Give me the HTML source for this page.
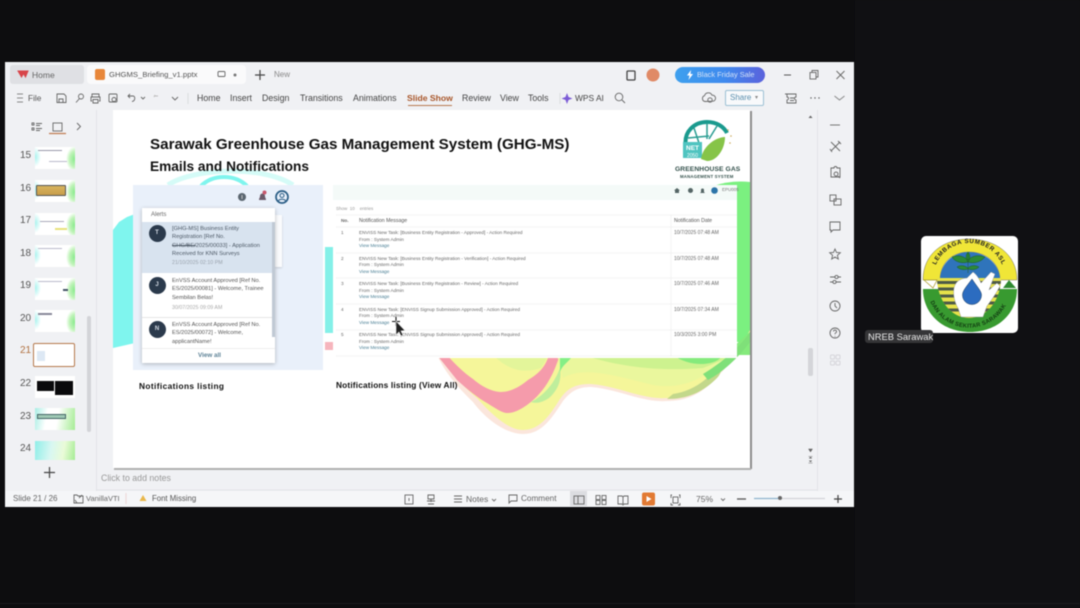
<!DOCTYPE html>
<html><head><meta charset="utf-8"><style>
html,body{margin:0;padding:0;width:1080px;height:608px;overflow:hidden;background:#0d0d0f;font-family:"Liberation Sans",sans-serif}
#a{position:absolute;left:5px;top:62px;width:849px;height:445px;background:#f0f1f4;overflow:hidden}
#root{position:absolute;left:0;top:0;width:1080px;height:608px;filter:blur(.4px)}
.t{position:absolute;white-space:nowrap;line-height:1}
svg{position:absolute;overflow:visible}
.ic{fill:none;stroke:#666;stroke-width:.9}
.n{position:absolute;font-size:10px;color:#555;line-height:1}
.th{position:absolute;left:30px;width:40px;height:22px;overflow:hidden;background:radial-gradient(ellipse 9px 13px at 100% 55%,#86ea8a 0,#bff3b8 60%,transparent 100%),radial-gradient(ellipse 6px 10px at 0 45%,#a5f3ee 0,transparent 100%),#fff}
.m{position:absolute;font-size:4.700px;color:#666;white-space:nowrap;line-height:1}
.d{font-size:5px}
.l{color:#4a7f95}
</style></head><body><div id="root">
<div style="position:absolute;left:855px;top:0;width:225px;height:608px;background:#101013"></div>
<div style="position:absolute;left:0;top:603px;width:1080px;height:1px;background:#1c1c1e"></div>

<div id="a"></div>
<div style="position:absolute;left:5px;top:491px;width:849px;height:16px;background:#f5f6f8"></div>

<!-- title bar -->
<div style="position:absolute;left:10px;top:65px;width:74px;height:19px;background:#dfe0e4;border-radius:3px"></div>
<div style="position:absolute;left:87px;top:65px;width:159px;height:19px;background:#fafafb;border-radius:4px"></div>
<svg style="left:0;top:0" width="1080" height="608">
<path d="M18 71h10l-2.500 6-2-3.500-2 3.500z" fill="#d8454a" stroke="#d8454a" stroke-width="1"/>
<rect x="95" y="69" width="10" height="11" rx="2" fill="#e8873a"/>
<rect x="218" y="71.500" width="7" height="5" rx="1" class="ic"/>
<circle cx="235" cy="75" r="1.500" fill="#777"/>
<path d="M260 70v10M255 75h10" stroke="#444" stroke-width="1.200"/>
<rect x="627" y="71" width="8" height="9" rx="1" fill="none" stroke="#444" stroke-width="1.300"/>
<circle cx="653" cy="75" r="6.500" fill="#e08a66"/>
<path d="M784 75h7" stroke="#555"/>
<rect x="810" y="72.500" width="6" height="6.500" class="ic"/><path d="M812 72.500v-2h6v6.500h-2" class="ic"/>
<path d="M836.500 71l8 8M844.500 71l-8 8" class="ic"/>
<path d="M17 94h6M17 98h6M17 102h6" stroke="#888"/>
<path d="M57 94h7l2 2v6.500h-9z" class="ic"/><path d="M59 102v-3h4v3" class="ic"/>
<circle cx="81" cy="96.500" r="2.500" class="ic"/><path d="M76 102.500l3.500-4" class="ic"/>
<path d="M92 97v-3h7v3M92 101h-1v-4h9v4h-1M93 99.500h5v3.500h-5z" class="ic"/>
<rect x="109" y="94" width="8" height="8" rx="1" class="ic"/><circle cx="114" cy="99.500" r="2" class="ic"/>
<path d="M128 96h5c2.500 0 2.500 5-1 5.500M130 94l-2 2 2 2" class="ic"/>
<path d="M141 97l2 2 2-2" class="ic"/>
<path d="M158 96h-3M155 95l-1 2" stroke="#bbb"/>
<path d="M172 97l3 3 3-3" class="ic"/>
<path d="M188 93v11M560 93v11" stroke="#dcdcdf"/>
<path d="M567 93l1.500 4 4 1.500-4 1.500-1.500 4-1.500-4-4-1.500 4-1.500z" fill="#7b5bd6"/>
<circle cx="619" cy="97" r="3.800" class="ic"/><path d="M622 100l3 3" class="ic"/>
<path d="M705 101.500a3 3 0 0 1-.5-5.800 4 4 0 0 1 7.500-.5 3 3 0 0 1 1 6z" class="ic"/><circle cx="710" cy="100" r="2.200" class="ic"/>
<path d="M787 94h9v3a1.500 1.500 0 0 0 0 3v3h-9v-3a1.500 1.500 0 0 0 0-3zM785 94h2M790 98h4M790 100.500h4" class="ic"/>
<circle cx="811" cy="98" r=".7" fill="#555"/><circle cx="815" cy="98" r=".7" fill="#555"/><circle cx="819" cy="98" r=".7" fill="#555"/>
<path d="M834.500 96l5 4 5-4" fill="none" stroke="#888"/>
<path d="M32 123h2v2h-2zM32 128h2v2h-2zM36 123.500h6M36 125.500h4M36 128.500h6M36 130.500h4" class="ic"/>
<rect x="53" y="123" width="9" height="8" class="ic"/>
<path d="M49 133.500h17" stroke="#c07c50" stroke-width="1.200"/>
<path d="M77 123l3.500 3.500-3.500 3.500" class="ic"/>
<path d="M96.500 110v381M817.500 110v381" stroke="#e3e4e8"/>
<path d="M96 490h721" stroke="#e2e3e7"/>
</svg>
<span class="t" style="left:32px;top:71px;font-size:8.500px;color:#666">Home</span>
<span class="t" style="left:109px;top:71px;font-size:7.700px;color:#555">GHGMS_Briefing_v1.pptx</span>
<span class="t" style="left:274px;top:71px;font-size:8px;color:#888">New</span>
<div style="position:absolute;left:675px;top:67px;width:90px;height:16px;border-radius:8px;background:linear-gradient(90deg,#3ea0ee,#3f8aee 55%,#5b62dc)"></div>
<svg style="left:686px;top:70px" width="8" height="10"><path d="M5 0L1 5.500h2.500L2.500 10 7 4H4.500z" fill="#fff"/></svg>
<span class="t" style="left:697px;top:71px;font-size:7.400px;color:#d3e2f8">Black Friday Sale</span>
<span class="t" style="left:28px;top:94px;font-size:8.300px;color:#555">File</span>
<span class="t" style="left:197px;top:94px;font-size:8.800px;color:#444">Home</span>
<span class="t" style="left:230px;top:94px;font-size:8.800px;color:#444">Insert</span>
<span class="t" style="left:262px;top:94px;font-size:8.800px;color:#444">Design</span>
<span class="t" style="left:300px;top:94px;font-size:8.800px;color:#444">Transitions</span>
<span class="t" style="left:353px;top:94px;font-size:8.800px;color:#444">Animations</span>
<span class="t" style="left:407px;top:94px;font-size:8.600px;color:#a8562a;font-weight:bold">Slide Show</span>
<div style="position:absolute;left:408px;top:105px;width:44px;height:1px;background:#b8794f"></div>
<span class="t" style="left:462px;top:94px;font-size:8.800px;color:#444">Review</span>
<span class="t" style="left:500px;top:94px;font-size:8.800px;color:#444">View</span>
<span class="t" style="left:528px;top:94px;font-size:8.800px;color:#444">Tools</span>
<span class="t" style="left:575px;top:94px;font-size:8.400px;color:#444">WPS AI</span>
<div style="position:absolute;left:725px;top:90px;width:37px;height:14px;border:1px solid #9cc0d4;border-radius:2px;background:#f8f9fb"></div>
<span class="t" style="left:730px;top:94px;font-size:8px;color:#5a8fae">Share</span>
<span class="t" style="left:755px;top:95px;font-size:6px;color:#888">▾</span>

<!-- thumbs -->
<div style="position:absolute;left:5px;top:110px;width:91px;height:380px">
<span class="n" style="top:41px;left:15px">15</span><span class="n" style="top:74px;left:15px">16</span><span class="n" style="top:106px;left:15px">17</span><span class="n" style="top:139px;left:15px">18</span><span class="n" style="top:171px;left:15px">19</span><span class="n" style="top:204px;left:15px">20</span><span class="n" style="top:236px;left:15px;color:#b0703f">21</span><span class="n" style="top:269px;left:15px">22</span><span class="n" style="top:302px;left:15px">23</span><span class="n" style="top:334px;left:15px">24</span>
<div class="th" style="top:37px"><div style="position:absolute;left:3px;top:3px;width:24px;height:1px;background:#99a"></div><div style="position:absolute;left:14px;top:14px;width:18px;height:1px;background:#bbc"></div></div>
<div class="th" style="top:70px"><div style="position:absolute;left:1px;top:5px;width:28px;height:9px;background:linear-gradient(#d8b45e,#c79d4c);border:1px solid #555;border-radius:1px"></div></div>
<div class="th" style="top:103px"><div style="position:absolute;left:5px;top:8px;width:24px;height:1px;background:#aab"></div><div style="position:absolute;left:20px;top:15px;width:12px;height:2px;background:#e8e27a"></div></div>
<div class="th" style="top:135px"><div style="position:absolute;left:3px;top:3px;width:24px;height:1px;background:#bbc"></div></div>
<div class="th" style="top:168px"><div style="position:absolute;left:28px;top:11px;width:5px;height:2px;background:#456"></div><div style="position:absolute;left:3px;top:3px;width:24px;height:1px;background:#bbc"></div></div>
<div class="th" style="top:200px"><div style="position:absolute;left:3px;top:3px;width:14px;height:1.500px;background:#889"></div></div>
<div style="position:absolute;left:28px;top:233px;width:40px;height:22px;border:1.500px solid #b5794d;border-radius:2px;background:#fff"><div style="position:absolute;left:3px;top:7px;width:8px;height:10px;background:#dde8f4"></div></div>
<div class="th" style="top:266px;background:#fff"><div style="position:absolute;left:2px;top:5px;width:17px;height:10px;background:#0a0a0c"></div><div style="position:absolute;left:20px;top:5px;width:18px;height:14px;background:#0a0a0c"></div></div>
<div class="th" style="top:298px;background:linear-gradient(100deg,#a8eee4 0,#fff 30%,#fff 55%,#a5ec94 100%)"><div style="position:absolute;left:2px;top:6px;width:27px;height:3px;background:#9fc9b5;border:1px solid #466"></div></div>
<div class="th" style="top:331px;height:19px;background:linear-gradient(100deg,#8feee8 0,#d8f7f2 40%,#eafbd8 70%,#a5ec94 100%)"></div>
<div style="position:absolute;left:82px;top:206px;width:4px;height:116px;background:#d3d4d8;border-radius:2px"></div>
</div>
<svg style="left:44px;top:467px" width="11" height="11"><path d="M5.500 0v11M0 5.500h11" stroke="#444" stroke-width="1.200"/></svg>

<!-- slide -->
<div style="position:absolute;left:113px;top:110px;width:637px;height:358px;background:#fff;overflow:hidden">
<div style="position:absolute;left:0;top:104px;width:22px;height:134px;background:#7ff5ee;clip-path:polygon(0 16px,6px 8px,14px 3px,100% 0,100% 129px,0 134px)"></div>
<svg style="left:0;top:0" width="637" height="358">
<path d="M55 75C80 58 150 55 180 75" fill="none" stroke="#d5fbf7" stroke-width="5"/>
<path d="M88 76C100 64 122 64 134 76" fill="none" stroke="#7ff5ee" stroke-width="4"/>
<rect x="212" y="137" width="8" height="86" fill="#84f0e8"/>
<rect x="212" y="232" width="8" height="8" fill="#f6b5bd"/>
<path d="M600 76Q618 70 637 72V232H600z" fill="#7bf080"/>
<!-- wave outer -->
<path d="M324 245C335 268 350 282 360 292 375 312 395 324 410 324 430 324 440 306 450 291 458 281 465 277 478 277 505 279 530 293 554 291 575 291 590 283 605 266 620 251 630 236 637 222V245z" fill="#fbe6dc"/>
<path d="M328 245C340 266 352 278 364 288 380 306 396 320 410 320 428 320 438 303 447 289 456 276 465 274 478 274 505 276 530 290 554 288 575 288 590 281 603 264 618 249 630 234 637 220V245z" fill="#f5f69a"/>
<path d="M324 245L344 270C355 280 365 288 374 293 385 300 390 303 394 303 402 303 408 299 414 295 428 285 438 270 444 253L447 245H436C432 258 425 264 415 270 405 278 397 282 387 282 377 281 368 276 360 269 350 262 342 254 334 245z" fill="#f59bab"/>
<path d="M380 245C395 260 410 264 428 258L436 245z" fill="#e3f59a"/>
<path d="M418 292C432 285 442 272 447 258 449 270 445 280 436 288 430 292 424 294 418 292z" fill="#bfee9c"/>
<path d="M444 245L450 268C470 256 500 265 540 275 570 280 595 268 615 245z" fill="#eaf79d"/>
<path d="M447 245L447 262C449 255 456 252 460 245z" fill="#84ef86"/>
<path d="M470 245C500 255 540 262 590 258 605 252 615 248 620 245z" fill="#cdf28f"/>
<path d="M560 245C575 256 595 256 605 250L637 222V245z" fill="#85ea7c"/>
<path d="M560 284C575 282 590 274 602 260 608 255 610 262 604 268 590 282 575 289 554 289z" fill="#c3d88b"/>
<path d="M590 264C605 255 625 240 637 222V232C625 248 610 262 595 270z" fill="#7fe079"/>
</svg>
<span class="t" style="left:37px;top:27px;font-size:15.200px;font-weight:bold;color:#111">Sarawak Greenhouse Gas Management System (GHG-MS)</span>
<span class="t" style="left:37px;top:50px;font-size:13.700px;font-weight:bold;color:#111">Emails and Notifications</span>
<!-- logo -->
<svg style="left:568px;top:9px" width="60" height="46">
<path d="M5 28C2 12 14 3 26 3 36 3 43 8 46 14" fill="none" stroke="#1a9a8e" stroke-width="4"/>
<path d="M13 9L18 24M26 4L26 20M7 19L28 17M36 7L28 20" stroke="#2a9d92" stroke-width="1.500"/>
<rect x="2" y="23" width="19" height="16" fill="#4fc4c0"/>
<path d="M20 40C22 26 36 18 44 18 44 30 36 42 26 42z" fill="#86c448"/>
<text x="11.500" y="31" font-size="6.500" fill="#fff" text-anchor="middle" font-weight="bold" font-family="Liberation Sans">NET</text>
<text x="11.500" y="38" font-size="5" fill="#fff" text-anchor="middle" font-family="Liberation Sans">2050</text>
<circle cx="47" cy="11" r=".8" fill="#c9a95a"/><circle cx="50" cy="17" r=".8" fill="#c9a95a"/><circle cx="49" cy="24" r=".8" fill="#c9a95a"/>
</svg>
<span class="t" style="left:562px;top:57px;font-size:6.700px;font-weight:bold;color:#33504b;letter-spacing:.1px">GREENHOUSE GAS</span>
<span class="t" style="left:567px;top:65px;font-size:4.300px;font-weight:bold;color:#33504b;letter-spacing:.2px">MANAGEMENT SYSTEM</span>

<!-- left panel -->
<div style="position:absolute;left:20px;top:75px;width:190px;height:185px;background:#e9f0fa"></div>
<div style="position:absolute;left:162px;top:105px;width:7px;height:52px;background:#fafbfd;box-shadow:0 1px 2px rgba(0,0,0,.15)"></div>
<div style="position:absolute;left:29px;top:98px;width:133px;height:155px;background:#fff;box-shadow:0 1px 4px rgba(0,0,0,.25);overflow:hidden">
<div class="m" style="left:9px;top:4px;font-size:6px">Alerts</div>
<div style="position:absolute;left:0;top:14px;width:133px;height:51px;background:#d8e3ef"></div>
<div style="position:absolute;left:0;top:109px;width:133px;height:1px;background:#e5e5e5"></div>
<div style="position:absolute;left:0;top:140px;width:133px;height:1px;background:#eee"></div>
<div style="position:absolute;left:130px;top:14px;width:3px;height:115px;background:#c0c9d4"></div>
<div style="position:absolute;left:6.500px;top:16.500px;width:17px;height:17px;border-radius:50%;background:#2b3a4c;color:#d5dce5;font-size:6px;text-align:center;line-height:17px;font-weight:bold">T</div>
<div style="position:absolute;left:6.500px;top:68.500px;width:17px;height:17px;border-radius:50%;background:#2b3a4c;color:#d5dce5;font-size:6px;text-align:center;line-height:17px;font-weight:bold">J</div>
<div style="position:absolute;left:6.500px;top:112.500px;width:17px;height:17px;border-radius:50%;background:#2b3a4c;color:#d5dce5;font-size:6px;text-align:center;line-height:17px;font-weight:bold">N</div>
<div class="m" style="left:30px;top:17px;font-size:5.700px;line-height:8.400px;color:#4d5966">[GHG-MS] Business Entity<br>Registration [Ref No.<br><s>GHG/BE/</s>2025/00033] - Application<br>Received for KNN Surveys</div>
<div class="m" style="left:30px;top:53px;font-size:5.300px;color:#9aa3ad">21/10/2025 02:10 PM</div>
<div class="m" style="left:30px;top:69px;font-size:5.700px;line-height:8.400px;color:#555">EnVSS Account Approved [Ref No.<br>ES/2025/00081] - Welcome, Trainee<br>Sembilan Belas!</div>
<div class="m" style="left:30px;top:97.500px;font-size:5.300px;color:#aaa">30/07/2025 09:09 AM</div>
<div class="m" style="left:30px;top:113px;font-size:5.700px;line-height:8.400px;color:#555">EnVSS Account Approved [Ref No.<br>ES/2025/00072] - Welcome,<br>applicantName!</div>
<div class="m" style="left:56px;top:145px;font-size:6.300px;color:#5d8296;font-weight:bold">View all</div>
</div>
<svg style="left:0;top:0" width="230" height="100">
<circle cx="129" cy="87" r="4" fill="#5b6670"/><path d="M129 85v4" stroke="#ddd" stroke-width=".8"/>
<path d="M146 90c0-2 1-2 1-4a2.500 2.500 0 0 1 5 0c0 2 1 2 1 4z" fill="#6b5a6a"/><circle cx="151.500" cy="82.500" r="2" fill="#c8566c"/>
<circle cx="169" cy="87" r="6" fill="none" stroke="#2b5e86" stroke-width="1.700"/><circle cx="169" cy="85.500" r="2" fill="none" stroke="#2b5e86"/><path d="M165 91.500c1-3 7-3 8 0" fill="none" stroke="#2b5e86"/>
</svg>
<span class="t" style="left:26px;top:272px;font-size:8.300px;font-weight:bold;color:#111;letter-spacing:.4px">Notifications listing</span>

<!-- right table -->
<div style="position:absolute;left:220px;top:75px;width:404px;height:173px;background:#fff"></div>
<div style="position:absolute;left:220px;top:75px;width:404px;height:15px;background:#f4faf8"></div>
<svg style="left:220px;top:75px" width="404" height="173">
<path d="M338 30v141M3 30h401M3 42h401M3 68h401M3 93h401M3 119h401M3 145h401M3 171h401" stroke="#efefef" stroke-width=".7"/>
<path d="M344 3l3 2.500h-1v2.500h-4v-2.500h-1z" fill="#566"/><circle cx="357.500" cy="5.500" r="2.500" fill="#566"/><path d="M367 8l1-1v-2a1.500 1.500 0 0 1 3 0v2l1 1z" fill="#566"/><circle cx="381.500" cy="5.500" r="3.300" fill="#2c74a8"/>
</svg>
<span class="m" style="left:609px;top:78px;font-size:4.500px;z-index:2;color:#777">EPU005</span>
<span class="m" style="left:223px;top:97px;font-size:4.500px;color:#999">Show &nbsp;10 &nbsp; &nbsp;entries</span>
<span class="m" style="left:228px;top:109px;font-weight:bold">No.</span>
<span class="m" style="left:246px;top:109px;font-size:5.200px;color:#555">Notification Message</span>
<span class="m" style="left:561px;top:109px;font-size:5.200px;color:#555">Notification Date</span>
<span class="m" style="left:228px;top:121px">1</span><span class="m" style="left:246px;top:121px">ENVISS New Task: [Business Entity Registration - Approved] - Action Required</span><span class="m" style="left:246px;top:128px">From : System Admin</span><span class="m l" style="left:246px;top:134px">View Message</span><span class="m d" style="left:561px;top:121px">10/7/2025 07:48 AM</span>
<span class="m" style="left:228px;top:147px">2</span><span class="m" style="left:246px;top:147px">ENVISS New Task: [Business Entity Registration - Verification] - Action Required</span><span class="m" style="left:246px;top:153px">From : System Admin</span><span class="m l" style="left:246px;top:160px">View Message</span><span class="m d" style="left:561px;top:147px">10/7/2025 07:48 AM</span>
<span class="m" style="left:228px;top:172px">3</span><span class="m" style="left:246px;top:172px">ENVISS New Task: [Business Entity Registration - Review] - Action Required</span><span class="m" style="left:246px;top:179px">From : System Admin</span><span class="m l" style="left:246px;top:185px">View Message</span><span class="m d" style="left:561px;top:172px">10/7/2025 07:46 AM</span>
<span class="m" style="left:228px;top:198px">4</span><span class="m" style="left:246px;top:198px">ENVISS New Task: [ENVISS Signup Submission Approved] - Action Required</span><span class="m" style="left:246px;top:204px">From : System Admin</span><span class="m l" style="left:246px;top:211px">View Message</span><span class="m d" style="left:561px;top:198px">10/7/2025 07:34 AM</span>
<span class="m" style="left:228px;top:223px">5</span><span class="m" style="left:246px;top:223px">ENVISS New Task: [ENVISS Signup Submission Approved] - Action Required</span><span class="m" style="left:246px;top:230px">From : System Admin</span><span class="m l" style="left:246px;top:236px">View Message</span><span class="m d" style="left:561px;top:223px">10/3/2025 3:00 PM</span>
<span class="t" style="left:223px;top:271px;font-size:8.300px;font-weight:bold;color:#111;letter-spacing:.17px">Notifications listing (View All)</span>
</div>
<div style="position:absolute;left:750px;top:111px;width:1.500px;height:358px;background:#8d8d8d"></div>
<div style="position:absolute;left:114px;top:468px;width:637px;height:1.500px;background:#b0b0b0"></div>

<!-- cursor -->
<svg style="left:390px;top:315px" width="18" height="22">
<path d="M6 2v9M2 6.500h8" stroke="#111" stroke-width="1.100"/>
<path d="M6 6l0 14 3-3 2 4 2-1-2-4 4-.5z" fill="#222" stroke="#eee" stroke-width=".6"/>
</svg>

<!-- right rail -->
<svg style="left:0;top:0" width="1080" height="608">
<path d="M830 125h10" stroke="#777"/>
<g>
<path class="ic" d="M831 142l9 9M840 142l-9 9M838 141l3 3M830 149l2 3"/>
<path class="ic" d="M831 168h3a1.500 1.500 0 0 1 3 0h3v9h-9zM836 172a2 2 0 1 0 .1 0M838 176l2 2"/>
<rect class="ic" x="830" y="195" width="6" height="6"/><rect class="ic" x="834" y="199" width="7" height="6"/>
<path class="ic" d="M830 222h10v8h-7l-2 2v-2h-1z"/>
<path class="ic" d="M835 249l1.500 3.500 3.800.3-2.900 2.500.9 3.700-3.300-2-3.300 2 .9-3.700-2.900-2.500 3.800-.3z"/>
<path class="ic" d="M830 277h5M838 277h3M830 282h3M836 282h5"/><circle class="ic" cx="836.500" cy="277" r="1.600"/><circle class="ic" cx="834.500" cy="282" r="1.600"/>
<circle class="ic" cx="835" cy="306" r="5"/><path class="ic" d="M835 303v3l2 2"/>
<circle class="ic" cx="835" cy="333" r="5"/><path class="ic" d="M833.500 331.500a1.500 1.500 0 1 1 2 1.500c-.5.300-.5.600-.5 1.200M835 336v.6"/>
</g>
<g fill="none" stroke="#d5d5da">
<rect x="830.500" y="355" width="4" height="4" rx="1"/><rect x="836" y="355" width="4" height="4" rx="1"/><rect x="830.500" y="361" width="4" height="4" rx="1"/><rect x="836" y="361" width="4" height="4" rx="1"/>
</g>
<rect x="808" y="348" width="5" height="28" rx="2" fill="#d4d5d9"/>
<path d="M808.500 118l2-2.500 2 2.500z" fill="#666"/>
<path d="M808.500 449l2 3 2-3zM808.500 456.500h4M809 458.500l1.500-1.500 1.500 1.500M808.500 463h4M809 460.500l1.500 1.500 1.500-1.500" fill="#666" stroke="#666" stroke-width=".5"/>
</svg>

<span class="t" style="left:101px;top:474px;font-size:8.800px;color:#999">Click to add notes</span>

<!-- status -->
<span class="t" style="left:13px;top:495px;font-size:8px;color:#666">Slide 21 / 26</span>
<span class="t" style="left:86px;top:495px;font-size:7.500px;color:#666">VanillaVTI</span>
<span class="t" style="left:152px;top:495px;font-size:7.800px;color:#555">Font Missing</span>
<span class="t" style="left:466px;top:495px;font-size:8.500px;color:#666">Notes</span>
<span class="t" style="left:521px;top:495px;font-size:8.200px;color:#666">Comment</span>
<span class="t" style="left:696px;top:495px;font-size:8.500px;color:#666">75%</span>
<svg style="left:0;top:0" width="1080" height="608">
<rect x="570" y="491" width="17" height="15" fill="#dcdde1"/>
<path class="ic" d="M74 495h3l1 1h5v7h-9zM75 500l2 3M82 495l-3 3"/>
<rect class="ic" x="405" y="495" width="8" height="9"/><path class="ic" d="M409 498v3"/>
<path class="ic" d="M428 495h6v4h-6zM428 504h6M431 499v3M427 501h8"/>
<path class="ic" d="M454 496h8M454 499h8M454 502h8"/>
<path class="ic" d="M509 495h8v6h-6l-2 2zM517 498v-2"/>
<rect class="ic" x="574" y="496" width="10" height="8"/><path class="ic" d="M578 496v8"/>
<rect class="ic" x="596" y="495.500" width="4" height="4"/><rect class="ic" x="602" y="495.500" width="4" height="4"/><rect class="ic" x="596" y="500.500" width="4" height="4"/><rect class="ic" x="602" y="500.500" width="4" height="4"/>
<path class="ic" d="M618 496h4l1 1 1-1h4v8h-4l-1 1-1-1h-4zM623 497v7"/>
<path class="ic" d="M672 495h-1v3M679 495h1v3M671 503v2h2M680 503v2h-2"/><rect class="ic" x="673" y="497" width="5" height="6"/>
<path d="M143 495l3.500 6h-7z" fill="#e9b84c"/>
<path d="M126 493v11" stroke="#ecd5d5"/>
<rect x="642" y="492.500" width="13" height="13" rx="2" fill="#e27a33"/><path d="M646.500 496l5 3-5 3z" fill="#fff"/>
<path d="M492 499l2 2 2-2M721 498.500l2 2 2-2" stroke="#777" fill="none"/>
<path d="M737 499h9" stroke="#555" stroke-width="1.300"/>
<path d="M754 498.500h24" stroke="#8fb5cd" stroke-width="1.300"/><path d="M780 498.500h45" stroke="#d3d4d8" stroke-width="1.300"/><circle cx="780" cy="498" r="2" fill="#666"/>
<path d="M834 499h8M838 495v8" stroke="#444" stroke-width="1.200"/>
</svg>

<!-- emblem -->
<div style="position:absolute;left:921px;top:236px;width:97px;height:97px;background:#fff;border-radius:5px"></div>
<svg style="left:921px;top:236px" width="97" height="97" viewBox="0 0 97 97">
<defs>
<path id="arc1" d="M14.800 29A36 36 0 0 1 81.200 29"/>
<path id="arc2" d="M8 62A41.800 41.800 0 0 0 88 62"/>
<clipPath id="cp"><path d="M16 42H80C80 64 66 82 48 82S16 64 16 42z"/></clipPath>
</defs>
<path d="M2 44C2 18 22 3 48 3S96 18 96 44H79C79 28 66 16 48 16S19 28 19 44z" fill="#f0e637" stroke="#555" stroke-width=".4"/>
<path d="M19 44C19 28 32 16 48 16S79 28 79 44z" fill="#2f74bb"/>
<path d="M2 53H96C96 78 76 96 49 96S2 78 2 53z" fill="#389a30"/>
<path d="M16 42H80C80 64 66 82 48 82S16 64 16 42z" fill="#e7e24a"/>
<g clip-path="url(#cp)" stroke="#4d5a48" stroke-width="3"><path d="M10 46.500H86M10 53H86M10 60H86M10 67H86M10 74H86"/></g>
<path d="M3 44l9 8 4-8z" fill="#fff" stroke="#a89a25" stroke-width=".7"/><path d="M82 52l6-8 7 8z" fill="#2f8a30"/>
<path d="M36 46C30 52 33 66 37 72L40 81H62L66 70C72 62 76 56 79 50L76 47 68 54 74 38 70 36 60 47C58 42 55 38 52 36L46 42C42 42 38 44 36 46z" fill="#fff" stroke="#888" stroke-width=".4"/>
<path d="M51 43c-6 8-9.500 12-9.500 16a9.500 9.500 0 0 0 19 0c0-4-5-9-9.500-16z" fill="#2c6cc0" stroke="#1c3a5a" stroke-width=".5"/>
<path d="M47 17V37M47 24c-6-5-11-5-16-3 3 5 10 7 16 5 6 2 13 0 17-5-6-2-12-2-17 3zM47 32c-4-3-8-3-11-1 3 3 8 3 11 2 4 1 8 1 11-2-4-2-8-2-11 1zM47 16c-2.500 3-2.500 7 0 10 2.500-3 2.500-7 0-10z" fill="#2c8a36" stroke="#1f5a28" stroke-width=".5"/>
<text font-family="Liberation Sans" font-size="6.200" font-weight="bold" fill="#222" letter-spacing=".6"><textPath href="#arc1" startOffset="0">LEMBAGA SUMBER ASLI</textPath></text>
<text font-family="Liberation Sans" font-size="5.800" font-weight="bold" fill="#123c12" letter-spacing=".25"><textPath href="#arc2" startOffset="4">DAN ALAM SEKITAR SARAWAK</textPath></text>
</svg>
<div style="position:absolute;left:865px;top:330px;width:68px;height:13px;background:#353537;border-radius:3px"></div>
<span class="t" style="left:868px;top:332px;font-size:9.400px;color:#e8e8e8">NREB Sarawak</span>
</div></body></html>
